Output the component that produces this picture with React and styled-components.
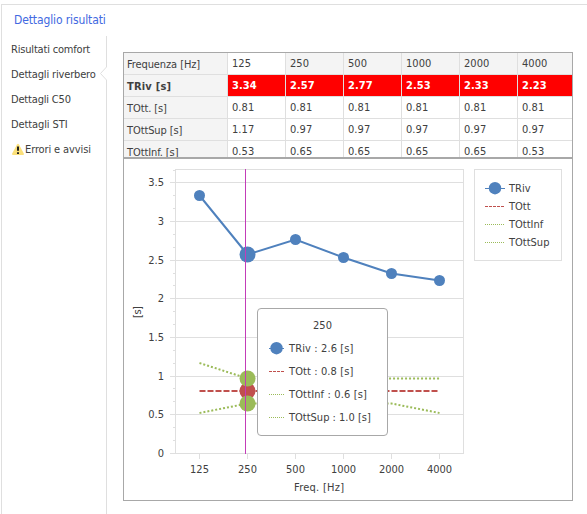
import React from "react";
import styled, { createGlobalStyle } from "styled-components";

const Global = createGlobalStyle`
  *{box-sizing:border-box}
  html,body{margin:0;height:514px;overflow:hidden;background:#fff}
  body{font-family:"DejaVu Sans Condensed","DejaVu Sans",sans-serif;font-stretch:condensed;font-size:11px;line-height:14px;color:#404040}
`;

const Frame = styled.div`
  margin: 4px 0 0 1px;
  width: 586px;
  height: 510px;
  border: solid #dfdfdf;
  border-width: 1px 0 0 1px;
`;
const Title = styled.h1`
  margin: 0;
  padding: 7px 0 0 12px;
  height: 31px;
  font-size: 12px;
  line-height: 16px;
  font-weight: 400;
  letter-spacing: -0.12px;
  color: #4169e1;
`;
const Body = styled.div`
  display: flex;
  height: 478px;
`;
const Tabs = styled.nav`
  width: 98px;
  flex: none;
  padding: 1px 0 0 9px;
`;
const Tab = styled.div`
  height: 25px;
  display: flex;
  align-items: center;
  white-space: nowrap;
  letter-spacing: ${(p) => p.$ls || 0}px;
`;
const Divider = styled.svg`
  width: 7px;
  height: 478px;
  flex: none;
`;
const Content = styled.main`
  margin: 16px 0 0 16px;
  width: 450px;
  height: 449px;
  border: 1px solid #a8a8a8;
`;
const Grid = styled.div`
  height: 106px;
  overflow: hidden;
  border-bottom: 2px solid #a8a8a8;
`;
const Row = styled.div`
  display: grid;
  grid-template-columns: 104px repeat(5, 58px) 54px;
  height: 22px;
  font-weight: ${(p) => (p.$alert ? 700 : 400)};
`;
const Cell = styled.div`
  padding: ${(p) => (p.$label ? "5px 0 0 3px" : "4px 0 0 4px")};
  border: solid #dfdfdf;
  border-width: 0 1px 1px 0;
  white-space: nowrap;
  letter-spacing: ${(p) => (p.$label ? (p.$bold ? 0.2 : -0.1) : 0.05)}px;
  background: ${(p) => (p.$red ? "#ff0000" : p.$gray ? "#f4f4f4" : "#fff")};
  color: ${(p) => (p.$red ? "#fff" : "#404040")};
  &:last-child { border-right: 0; }
`;
const ChartArea = styled.div`
  position: relative;
  height: 341px;
`;
const Plot = styled.svg`
  display: block;
  font-family: "DejaVu Sans Condensed", "DejaVu Sans", sans-serif;
  font-stretch: condensed;
  font-size: 11px;
  fill: #404040;
`;
const Legend = styled.div`
  position: absolute;
  left: 350px;
  top: 10px;
  width: 88px;
  height: 92px;
  padding: 9px 0 0 10px;
  border: 1px solid #dfdfdf;
`;
const LegendRow = styled.div`
  display: flex;
  align-items: center;
  gap: 4px;
  height: 18px;
`;
const Caption = styled.span`
  padding-top: 2px;
`;
const Tooltip = styled.div`
  position: absolute;
  left: 133px;
  top: 149px;
  width: 131px;
  height: 128px;
  padding: 10px 0 0 11px;
  border: 1px solid #a8a8a8;
  border-radius: 4px;
  background: #fff;
`;
const TipTitle = styled.div`
  width: 107px;
  height: 17px;
  text-align: center;
`;
const TipRow = styled.div`
  display: flex;
  align-items: center;
  gap: 5px;
  height: 23px;
  white-space: nowrap;
  letter-spacing: ${(p) => p.$ls || 0}px;
`;

const BLUE = "#4f81bd", RED = "#c0504d", GREEN = "#9bbb59", LINE = "#dfdfdf";

const rows = [
  ["Frequenza [Hz]", "125", "250", "500", "1000", "2000", "4000"],
  ["TRiv [s]", "3.34", "2.57", "2.77", "2.53", "2.33", "2.23"],
  ["TOtt. [s]", "0.81", "0.81", "0.81", "0.81", "0.81", "0.81"],
  ["TOttSup [s]", "1.17", "0.97", "0.97", "0.97", "0.97", "0.97"],
  ["TOttInf. [s]", "0.53", "0.65", "0.65", "0.65", "0.65", "0.53"],
];
const xs = [199.5, 247.5, 295.5, 343.5, 391.5, 439.5];
const freqs = rows[0].slice(1);
const triv = [195.5, 254.5, 239.5, 257.5, 273.5, 280.5];
const grid = [[182, "3.5"], [221, "3"], [260, "2.5"], [298, "2"], [337, "1.5"], [376, "1"], [414, "0.5"], [453, "0"]];
const minor = [170, 195, 208, 234, 247, 273, 285, 311, 324, 350, 363, 388, 401, 427, 440];
const pts = (ys) => ys.map((y, i) => `${xs[i]},${y}`).join(" ");

function Swatch({ kind, w }) {
  return (
    <svg width={w} height="14">
      {kind === "triv" && <><path d={`M0 7.5H${w}`} stroke={BLUE} /><circle cx={w / 2} cy="7.2" r="6.2" fill={BLUE} /></>}
      {kind === "tott" && <path d={`M0 7.5H${w}`} stroke={RED} strokeDasharray="3 1" />}
      {kind === "dot" && <path d={`M0 7.5H${w}`} stroke={GREEN} strokeDasharray="1 1" />}
    </svg>
  );
}

function Warning() {
  return (
    <svg width="14" height="14" viewBox="0 0 14 14">
      <path d="M6 1.4Q7 0 8 1.4L12.8 10.4Q13.3 12 12 12H2Q.7 12 1.2 10.4Z" fill="#fbe07a" />
      <path d="M7 3.6V7.8M7 9.2V11" stroke="#222" strokeWidth="2" />
    </svg>
  );
}

function Chart() {
  return (
    <Plot width="448" height="341" viewBox="124 159 448 341">
      <g stroke={LINE} fill="none" shapeRendering="crispEdges">
        <rect x="175.5" y="169.5" width="288" height="284" />
        {grid.map(([y]) => <path key={y} d={`M170 ${y + 0.5}H463`} />)}
        {minor.map((y) => <path key={y} d={`M173 ${y + 0.5}H175`} />)}
        {xs.map((x) => <path key={x} d={`M${x} 454V459`} />)}
      </g>
      {grid.map(([y, t]) => <text key={t} x="164" y={y + 4} textAnchor="end">{t}</text>)}
      {xs.map((x, i) => <text key={x} x={x} y="473" textAnchor="middle">{freqs[i]}</text>)}
      <text x="294" y="491" textLength="50">Freq. [Hz]</text>
      <text transform="translate(140.5 318) rotate(-90)" textLength="12">[s]</text>
      <g fill="none" strokeWidth="2">
        <polyline points={pts(triv)} stroke={BLUE} />
        <path d="M199.5 391H439" stroke={RED} strokeDasharray="6 2" />
        <polyline points={pts([363, 378.5, 378.5, 378.5, 378.5, 378.5])} stroke={GREEN} strokeDasharray="2 2" />
        <polyline points={pts([413, 403.5, 403.5, 403.5, 403.5, 413])} stroke={GREEN} strokeDasharray="2 2" />
      </g>
      {triv.map((y, i) => <circle key={i} cx={xs[i]} cy={y} r={i === 1 ? 8 : 5.5} fill={BLUE} />)}
      <circle cx="247.5" cy="391" r="8" fill={RED} />
      <circle cx="247.5" cy="378.5" r="8" fill={GREEN} />
      <circle cx="247.5" cy="403.5" r="8" fill={GREEN} />
      <path d="M245.5 169V454" stroke="#c33cb8" />
    </Plot>
  );
}

const series = [["triv", "TRiv"], ["tott", "TOtt"], ["dot", "TOttInf"], ["dot", "TOttSup"]];
const tips = [["triv", "TRiv : 2.6 [s]", 0.12], ["tott", "TOtt : 0.8 [s]", 0.1], ["dot", "TOttInf : 0.6 [s]", 0.14], ["dot", "TOttSup : 1.0 [s]", 0]];

export default function App() {
  return (
    <>
      <Global />
      <Frame>
        <Title>Dettaglio risultati</Title>
        <Body>
          <Tabs>
            <Tab $ls={-0.18}>Risultati comfort</Tab>
            <Tab $ls={-0.16}>Dettagli riverbero</Tab>
            <Tab $ls={-0.18}>Dettagli C50</Tab>
            <Tab $ls={-0.1}>Dettagli STI</Tab>
            <Tab $ls={-0.12}><Warning />Errori e avvisi</Tab>
          </Tabs>
          <Divider viewBox="0 0 7 478">
            <path d="M6.5 0V31L.5 37.5L6.5 44V478" fill="none" stroke={LINE} />
          </Divider>
          <Content>
            <Grid>
              {rows.map((r, i) => (
                <Row key={r[0]} $alert={i === 1}>
                  {r.map((c, j) => (
                    <Cell key={j} $label={j === 0} $bold={i === 1} $red={i === 1 && j > 0} $gray={j === 0 || (i === 0 && j > 1)}>{c}</Cell>
                  ))}
                </Row>
              ))}
            </Grid>
            <ChartArea>
              <Chart />
              <Legend>
                {series.map(([kind, name]) => (
                  <LegendRow key={name}><Swatch kind={kind} w={20} /><Caption>{name}</Caption></LegendRow>
                ))}
              </Legend>
              <Tooltip>
                <TipTitle>250</TipTitle>
                {tips.map(([kind, text, ls]) => (
                  <TipRow key={text} $ls={ls}><Swatch kind={kind} w={15} /><Caption>{text}</Caption></TipRow>
                ))}
              </Tooltip>
            </ChartArea>
          </Content>
        </Body>
      </Frame>
    </>
  );
}
